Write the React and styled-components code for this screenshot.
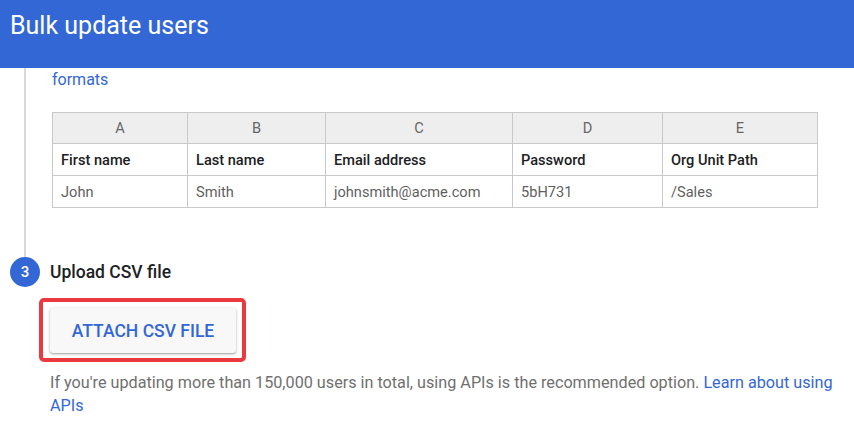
import React from "react";
import styled, { createGlobalStyle } from "styled-components";

const Global = createGlobalStyle`
  html, body { margin: 0; padding: 0; background: #ffffff; }
  body { font-family: Roboto, "Liberation Sans", Arial, sans-serif; overflow: hidden; }
  * { box-sizing: border-box; }
`;

const Page = styled.div`
  width: 854px;
  height: 445px;
  overflow: hidden;
  background: #fff;
`;

const Header = styled.header`
  height: 68px;
  background: #3367d6;
  padding: 11px 0 0 10px;
`;

const Title = styled.h1`
  margin: 0;
  font-size: 25px;
  line-height: 30px;
  font-weight: 400;
  color: #ffffff;
`;

const Step = styled.section`
  display: flex;
`;

const Rail = styled.div`
  width: 52px;
  flex: none;
  display: flex;
  justify-content: flex-start;
  &::before {
    content: "";
    display: block;
    width: 2px;
    margin-left: 24px;
    background: ${(p) => (p.$line ? "#d9d9d9" : "transparent")};
  }
`;

const StepBody = styled.div`
  padding: ${(p) => p.$pad || "0"};
`;

const Link = styled.a`
  color: #3367d6;
  text-decoration: none;
  font-size: 16px;
  line-height: 20px;
`;

const InlineLink = styled(Link)`
  font-size: inherit;
  line-height: inherit;
`;

const Table = styled.table`
  margin-top: 22px;
  border-collapse: collapse;
  table-layout: fixed;
  width: 766px;
  font-size: 14.6px;
`;

const HeadCell = styled.th`
  background: #eeeeee;
  color: #666666;
  font-weight: 400;
  text-align: center;
  height: 31px;
  border: 1px solid #c9c9c9;
  padding: 0;
`;

const Cell = styled.td`
  height: 32px;
  border: 1px solid #c9c9c9;
  padding: 0 8px;
  color: ${(p) => (p.$strong ? "#202124" : "#5f5f5f")};
  font-weight: ${(p) => (p.$strong ? 500 : 400)};
  white-space: nowrap;
`;

const StepHead = styled.div`
  display: flex;
  align-items: center;
  padding-left: 10px;
  gap: 10px;
`;

const Circle = styled.div`
  width: 30px;
  height: 30px;
  border-radius: 50%;
  background: #3367d6;
  color: #fff;
  font-size: 15px;
  font-weight: 500;
  display: flex;
  align-items: center;
  justify-content: center;
`;

const StepTitle = styled.h2`
  margin: 0;
  font-size: 17.5px;
  font-weight: 500;
  color: #202124;
`;

const Highlight = styled.div`
  display: inline-block;
  margin: 11px 0 0 39px;
  border: 4px solid #ea3a3f;
  border-radius: 5px;
  padding: 6px 6px 5px 7px;
`;

const Button = styled.button`
  display: block;
  width: 186px;
  height: 45px;
  border: none;
  border-radius: 3px;
  background: #f8f8f8;
  box-shadow: 0 1px 3px rgba(0, 0, 0, 0.3), 0 1px 1px rgba(0, 0, 0, 0.12);
  color: #3367d6;
  font-family: inherit;
  font-size: 17.5px;
  font-weight: 500;
  padding: 0;
  cursor: pointer;
`;

const Note = styled.p`
  margin: 9px 0 0 50px;
  width: 796px;
  font-size: 16.2px;
  line-height: 23px;
  color: #707070;
`;

const cols = [
  { w: 135, l: "A", h: "First name", v: "John" },
  { w: 138, l: "B", h: "Last name", v: "Smith" },
  { w: 187, l: "C", h: "Email address", v: "johnsmith@acme.com" },
  { w: 150, l: "D", h: "Password", v: "5bH731" },
  { w: 155, l: "E", h: "Org Unit Path", v: "/Sales" },
];

export default function App() {
  return (
    <Page>
      <Global />
      <Header>
        <Title>Bulk update users</Title>
      </Header>
      <Step>
        <Rail $line />
        <StepBody $pad="2px 0 49px 0">
          <Link href="#">formats</Link>
          <Table>
            <colgroup>
              {cols.map((c) => (
                <col key={c.l} style={{ width: c.w }} />
              ))}
            </colgroup>
            <thead>
              <tr>
                {cols.map((c) => (
                  <HeadCell key={c.l}>{c.l}</HeadCell>
                ))}
              </tr>
            </thead>
            <tbody>
              <tr>
                {cols.map((c) => (
                  <Cell key={c.l} $strong>{c.h}</Cell>
                ))}
              </tr>
              <tr>
                {cols.map((c) => (
                  <Cell key={c.l}>{c.v}</Cell>
                ))}
              </tr>
            </tbody>
          </Table>
        </StepBody>
      </Step>
      <StepHead>
        <Circle>3</Circle>
        <StepTitle>Upload CSV file</StepTitle>
      </StepHead>
      <Highlight>
        <Button>ATTACH CSV FILE</Button>
      </Highlight>
      <Note>
        If you're updating more than 150,000 users in total, using APIs is the recommended option.{" "}
        <InlineLink href="#">Learn about using APIs</InlineLink>
      </Note>
    </Page>
  );
}
